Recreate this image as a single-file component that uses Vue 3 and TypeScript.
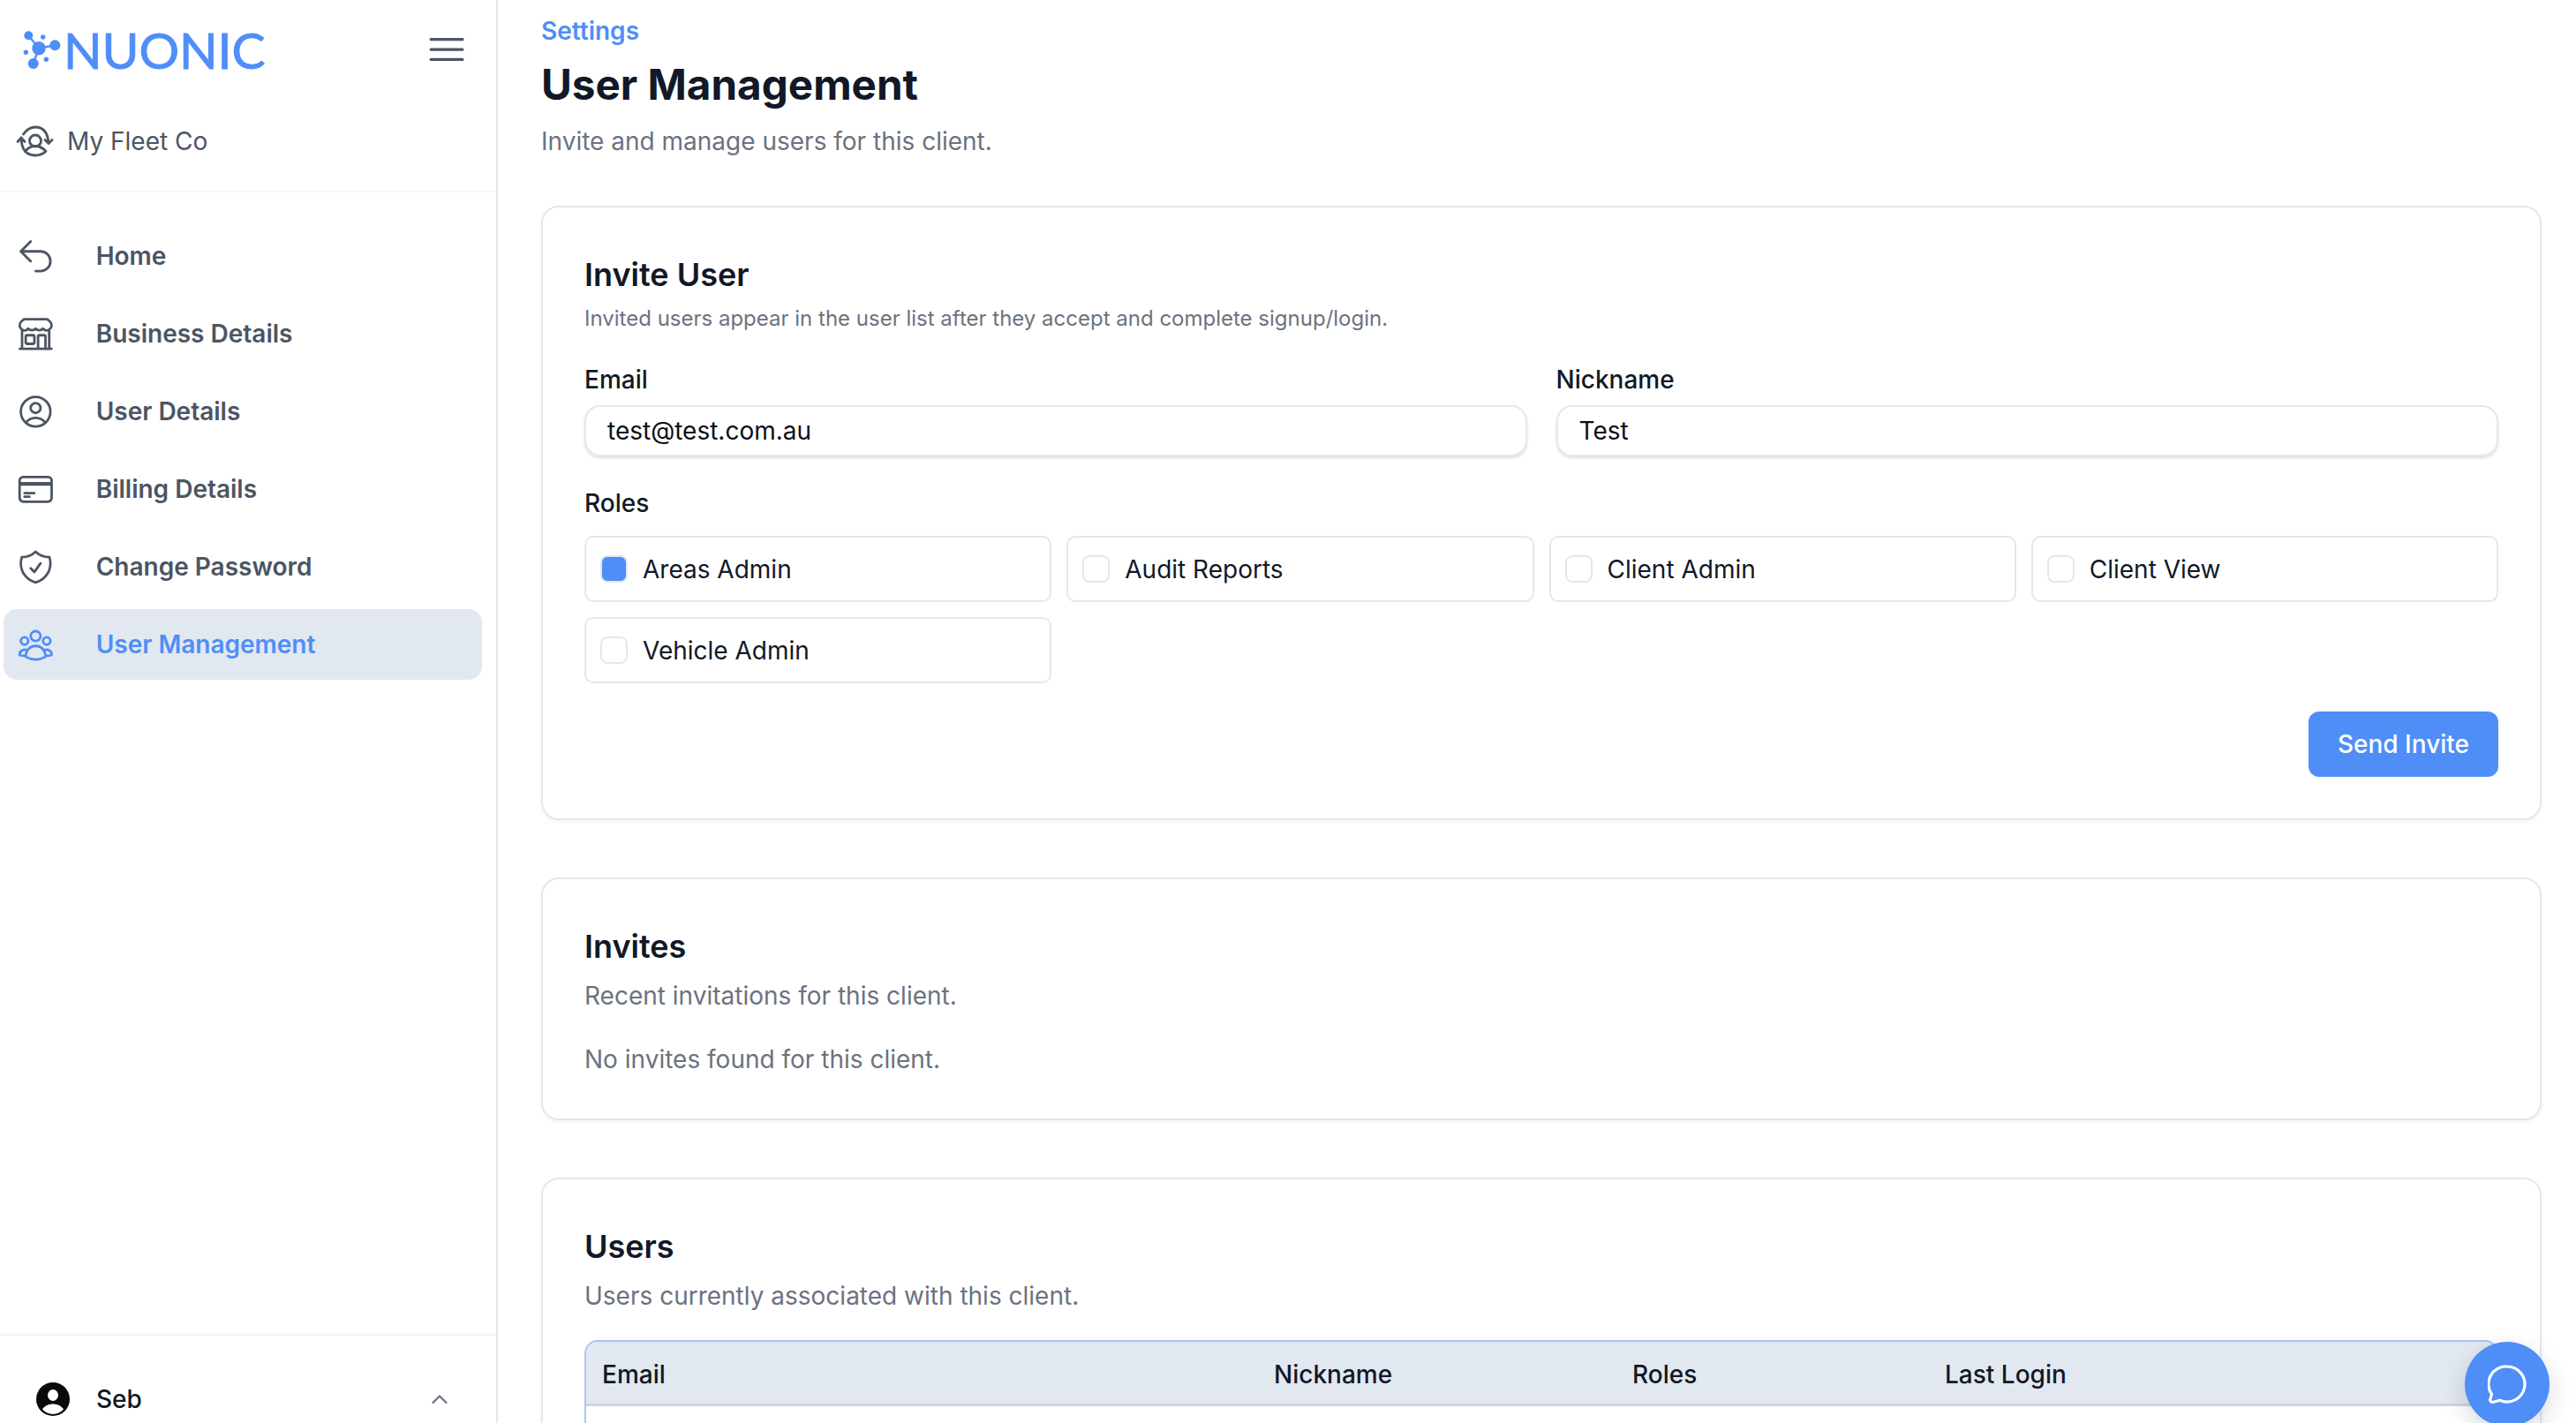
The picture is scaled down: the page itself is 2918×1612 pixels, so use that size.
<script setup lang="ts">
interface NavItem {
  label: string
  paths: string[]
  active?: boolean
}

const navItems: NavItem[] = [
  { label: 'Home', paths: ['M9 15 3 9m0 0 6-6M3 9h12a6 6 0 0 1 0 12h-3'] },
  {
    label: 'Business Details',
    paths: [
      'M13.5 21v-7.5a.75.75 0 0 1 .75-.75h3a.75.75 0 0 1 .75.75V21m-4.5 0H2.36m11.14 0H18m0 0h3.64m-1.39 0V9.349M3.75 21V9.349m0 0a3.004 3.004 0 0 0 3.75-.615A2.993 2.993 0 0 0 9.75 9.75c.896 0 1.7-.393 2.25-1.016a2.993 2.993 0 0 0 2.25 1.016c.896 0 1.7-.393 2.25-1.015a3.001 3.001 0 0 0 3.75.614m-16.5 0a3.004 3.004 0 0 1-.621-4.72l1.189-1.19A1.5 1.5 0 0 1 5.378 3h13.243a1.5 1.5 0 0 1 1.06.44l1.19 1.189a3 3 0 0 1-.621 4.72M6.75 18h3.75a.75.75 0 0 0 .75-.75V13.5a.75.75 0 0 0-.75-.75H6.75a.75.75 0 0 0-.75.75v3.75c0 .414.336.75.75.75Z'
    ]
  },
  {
    label: 'User Details',
    paths: [
      'M17.982 18.725A7.488 7.488 0 0 0 12 15.75a7.488 7.488 0 0 0-5.982 2.975m11.963 0a9 9 0 1 0-11.963 0m11.963 0A8.966 8.966 0 0 1 12 21a8.966 8.966 0 0 1-5.982-2.275M15 9.75a3 3 0 1 1-6 0 3 3 0 0 1 6 0Z'
    ]
  },
  {
    label: 'Billing Details',
    paths: [
      'M2.25 8.25h19.5M2.25 9h19.5m-16.5 5.25h6m-6 2.25h3m-3.75 3h15a2.25 2.25 0 0 0 2.25-2.25V6.75A2.25 2.25 0 0 0 19.5 4.5h-15a2.25 2.25 0 0 0-2.25 2.25v10.5A2.25 2.25 0 0 0 4.5 19.5Z'
    ]
  },
  {
    label: 'Change Password',
    paths: [
      'M9 12.75 11.25 15 15 9.75m-3-7.036A11.959 11.959 0 0 1 3.598 6 11.99 11.99 0 0 0 3 9.749c0 5.592 3.824 10.29 9 11.623 5.176-1.332 9-6.03 9-11.622 0-1.31-.21-2.571-.598-3.751h-.152c-3.196 0-6.1-1.248-8.25-3.285Z'
    ]
  },
  {
    label: 'User Management',
    active: true,
    paths: [
      'M18 18.72a9.094 9.094 0 0 0 3.741-.479 3 3 0 0 0-4.682-2.72m.94 3.198.001.031c0 .225-.012.447-.037.666A11.944 11.944 0 0 1 12 21c-2.17 0-4.207-.576-5.963-1.584A6.062 6.062 0 0 1 6 18.719m12 0a5.971 5.971 0 0 0-.941-3.197m0 0A5.995 5.995 0 0 0 12 12.75a5.995 5.995 0 0 0-5.058 2.772m0 0a3 3 0 0 0-4.68 2.72 8.986 8.986 0 0 0 3.74.477m.94-3.197a5.971 5.971 0 0 0-.94 3.197M15 6.75a3 3 0 1 1-6 0 3 3 0 0 1 6 0Zm6 3a2.25 2.25 0 1 1-4.5 0 2.25 2.25 0 0 1 4.5 0Zm-13.5 0a2.25 2.25 0 1 1-4.5 0 2.25 2.25 0 0 1 4.5 0Z'
    ]
  }
]

const roles = [
  { name: 'Areas Admin', checked: true },
  { name: 'Audit Reports', checked: false },
  { name: 'Client Admin', checked: false },
  { name: 'Client View', checked: false },
  { name: 'Vehicle Admin', checked: false }
]
</script>

<template>
  <div class="app">
    <aside class="sidebar">
      <div class="brand">
        <div class="logo">
          <svg class="logo-mark" viewBox="0 0 52 56" fill="#4f8ef7" stroke="#4f8ef7">
            <path d="M12.300 12.300 24 26.700 42.300 23.300M24 26.700 17.700 44" stroke-width="2.400" fill="none" />
            <g stroke="none">
              <circle cx="12.300" cy="12.300" r="5" />
              <circle cx="24" cy="26.700" r="7.700" />
              <circle cx="42.300" cy="23.300" r="6" />
              <circle cx="17.700" cy="44" r="6" />
              <circle cx="28.700" cy="14" r="2.700" />
              <circle cx="9.300" cy="31.300" r="2.700" />
              <circle cx="32.300" cy="39.300" r="2.700" />
            </g>
          </svg>
          <span class="logo-text">NUONIC</span>
        </div>
        <svg class="menu-icon" viewBox="0 0 24 24" fill="none" stroke="currentColor" stroke-width="1.5" stroke-linecap="round">
          <path d="M3.750 6.750h16.500M3.750 12h16.500m-16.500 5.250h16.500" />
        </svg>
      </div>

      <div class="client">
        <svg class="client-icon" viewBox="0 0 60 60" fill="none" stroke="currentColor" stroke-width="2.800" stroke-linecap="round" stroke-linejoin="round">
          <circle cx="30" cy="29.500" r="6.500" />
          <path d="M18.500 41.500C22 37 26 35.500 30 35.500s8 1.500 12 6c-4 3.500-8 4.500-12 4.500s-8-1-11.500-4.500Z" />
          <path d="M16.500 22C20 17 25 14 30 14c8 0 14 5 15 18" />
          <path d="M41 28.500 45 32.500 49 28.500" />
          <path d="M10 30.500 14 26 18 30.500M14 26c0 6 1 11 4.500 15.500" />
        </svg>
        <span>My Fleet Co</span>
      </div>

      <nav class="nav">
        <a v-for="item in navItems" :key="item.label" class="nav-item" :class="{ active: item.active }">
          <svg class="nav-icon" viewBox="0 0 24 24" fill="none" stroke="currentColor" stroke-width="1.5" stroke-linecap="round" stroke-linejoin="round">
            <path v-for="d in item.paths" :key="d" :d="d" />
          </svg>
          <span>{{ item.label }}</span>
        </a>
      </nav>

      <div class="account">
        <svg class="avatar" viewBox="0 0 38 38">
          <circle cx="19" cy="19" r="19" fill="#0a0a0a" />
          <ellipse cx="19" cy="14.500" rx="6" ry="6.500" fill="#fff" />
          <path d="M7 30.500c2.500-4 7-6 12-6s9.500 2 12 6c-3 3.400-7.300 5.500-12 5.500s-9-2.100-12-5.500Z" fill="#fff" />
        </svg>
        <span class="account-name">Seb</span>
        <svg class="chevron" viewBox="0 0 18 10" fill="none" stroke="currentColor" stroke-width="2.200" stroke-linecap="round" stroke-linejoin="round">
          <path d="M1.500 9 9 1.500 16.500 9" />
        </svg>
      </div>
    </aside>

    <main class="main">
      <p class="crumb">Settings</p>
      <h1 class="title">User Management</h1>
      <p class="subtitle">Invite and manage users for this client.</p>

      <section class="card invite">
        <h2 class="card-title">Invite User</h2>
        <p class="card-note">Invited users appear in the user list after they accept and complete signup/login.</p>

        <div class="fields">
          <div class="field">
            <label class="field-label">Email</label>
            <div class="input">test@test.com.au</div>
          </div>
          <div class="field">
            <label class="field-label">Nickname</label>
            <div class="input">Test</div>
          </div>
        </div>

        <div class="field-label roles-label">Roles</div>
        <div class="roles">
          <label v-for="role in roles" :key="role.name" class="role">
            <span class="checkbox" :class="{ checked: role.checked }"></span>
            <span>{{ role.name }}</span>
          </label>
        </div>

        <div class="actions">
          <button class="send" type="button">Send Invite</button>
        </div>
      </section>

      <section class="card">
        <h2 class="card-title">Invites</h2>
        <p class="card-sub">Recent invitations for this client.</p>
        <p class="card-empty">No invites found for this client.</p>
      </section>

      <section class="card users">
        <h2 class="card-title">Users</h2>
        <p class="card-sub">Users currently associated with this client.</p>
        <div class="table">
          <div class="table-head">
            <span class="col-email">Email</span>
            <span class="col-nick">Nickname</span>
            <span class="col-roles">Roles</span>
            <span>Last Login</span>
          </div>
          <div class="table-body"></div>
        </div>
      </section>
    </main>

    <button class="chat" type="button" aria-label="Chat">
      <svg viewBox="0 0 44 44" fill="none" stroke="#fff" stroke-width="3.200" stroke-linejoin="round">
        <path d="M22 2a20 20 0 1 1-8.300 38.200l-7 2c-2.500.6-4.600-.8-3.800-3.300l1.600-5.400A20 20 0 0 1 22 2Z" />
      </svg>
    </button>
  </div>
</template>

<style>
html,
body {
  margin: 0;
  height: 100%;
  background: #fff;
  overflow: hidden;
}
</style>

<style scoped>
.app {
  position: relative;
  display: flex;
  height: 1612px;
  overflow: hidden;
  background: #fff;
  color: #111827;
  font-family: Inter, "Liberation Sans", sans-serif;
  font-size: 28px;
}

.sidebar {
  flex: 0 0 564px;
  box-sizing: border-box;
  display: flex;
  flex-direction: column;
  border-right: 2px solid #e5e7eb;
}

.brand {
  display: flex;
  align-items: center;
  justify-content: space-between;
  height: 112px;
  padding: 0 30px 0 20px;
}

.logo {
  display: flex;
  align-items: center;
  gap: 0;
}

.logo-mark {
  width: 52px;
  height: 56px;
}

.logo-text {
  font-family: Lato, sans-serif;
  font-size: 57px;
  line-height: 44px;
  font-weight: 400;
  color: #4f8ef7;
  -webkit-text-stroke: 1px #4f8ef7;
}

.menu-icon {
  width: 52px;
  height: 52px;
  color: #4b5563;
}

.client {
  display: flex;
  align-items: center;
  gap: 6px;
  height: 106px;
  padding: 0 0 9px 10px;
  box-sizing: border-box;
  border-bottom: 2px solid #f3f4f6;
  color: #4b5563;
  font-size: 28px;
}

.client-icon {
  width: 60px;
  height: 60px;
  flex: none;
}

.nav {
  display: flex;
  flex-direction: column;
  gap: 8px;
  padding: 32px 16px 0 4px;
}

.nav-item {
  display: flex;
  align-items: center;
  gap: 46px;
  height: 80px;
  padding-left: 14px;
  border-radius: 15px;
  color: #4b5563;
  font-size: 28px;
  font-weight: 600;
}

.nav-item.active {
  background: #e2e8f0;
  color: #4f8ef7;
}

.nav-icon {
  width: 44.700px;
  height: 44.700px;
  flex: none;
}

.account {
  display: flex;
  align-items: center;
  margin-top: auto;
  height: 101px;
  box-sizing: border-box;
  padding: 54px 55px 9px 41px;
  border-top: 2px solid #f3f4f6;
}

.avatar {
  width: 38px;
  height: 38px;
  flex: none;
}

.account-name {
  margin-left: 30px;
  font-weight: 500;
}

.chevron {
  width: 18px;
  height: 10px;
  margin-left: auto;
  color: #6b7280;
}

.main {
  flex: 1;
  min-width: 0;
  padding: 19px 39px 0 49px;
}

.crumb {
  margin: 0;
  color: #4f8ef7;
  font-size: 28px;
  font-weight: 600;
  line-height: 32px;
}

.title {
  margin: 15px 0 0;
  font-size: 47.600px;
  line-height: 60px;
  font-weight: 700;
}

.subtitle {
  margin: 16px 0 0;
  color: #6b7280;
  font-size: 28px;
  line-height: 36px;
}

.card {
  box-sizing: border-box;
  margin-top: 65px;
  padding: 0 47px 49px;
  border: 2px solid #e2e8f0;
  border-radius: 20px;
  box-shadow: 0 2px 4px rgba(15, 23, 42, 0.05);
  background: #fff;
}

.card.invite {
  margin-top: 55px;
  padding-bottom: 47px;
}

.card-title {
  margin: 0;
  padding-top: 53px;
  font-size: 36px;
  line-height: 46px;
  font-weight: 600;
}

.card-note {
  margin: 11px 0 0;
  color: #6b7280;
  font-size: 24px;
  line-height: 32px;
}

.fields {
  display: grid;
  grid-template-columns: 1fr 1fr;
  gap: 33px;
  margin-top: 35px;
}

.field-label {
  display: block;
  font-weight: 500;
  line-height: 36px;
}

.input {
  box-sizing: border-box;
  height: 58px;
  margin-top: 11px;
  padding: 0 24px;
  border: 2px solid #e5e7eb;
  border-radius: 18px;
  box-shadow: 0 2px 3px rgba(15, 23, 42, 0.14);
  color: #0b0f19;
  font-size: 28px;
  line-height: 54px;
}

.roles-label {
  margin-top: 35px;
}

.roles {
  display: grid;
  grid-template-columns: repeat(4, 1fr);
  gap: 17px;
  margin-top: 19px;
}

.role {
  box-sizing: border-box;
  display: flex;
  align-items: center;
  gap: 17px;
  height: 75px;
  padding-left: 16px;
  border: 2px solid #e2e8f0;
  border-radius: 10px;
  font-size: 28px;
}

.checkbox {
  box-sizing: border-box;
  flex: none;
  width: 31px;
  height: 31px;
  border: 2px solid #e2e8f0;
  border-radius: 8px;
  background: #fff;
}

.checkbox.checked {
  background: #4f8ef7;
}

.actions {
  display: flex;
  justify-content: flex-end;
  margin-top: 32px;
}

.send {
  height: 74px;
  padding: 0 33px;
  border: 0;
  border-radius: 12px;
  background: #4f8ef7;
  color: #fff;
  font-family: inherit;
  font-size: 28px;
  font-weight: 500;
}

.card-sub {
  margin: 15px 0 0;
  color: #6b7280;
  font-size: 28px;
  line-height: 36px;
}

.card-empty {
  margin: 36px 0 0;
  color: #6b7280;
  font-size: 28px;
  line-height: 36px;
}

.users {
  padding-bottom: 0;
}

.table {
  margin-top: 32px;
  border: 2px solid #a5c5fb;
  border-bottom: 0;
  border-radius: 15px 15px 0 0;
  overflow: hidden;
}

.table-head {
  box-sizing: border-box;
  display: flex;
  align-items: center;
  height: 73px;
  padding: 4px 0 0 18px;
  background: #e2e8f0;
  border-bottom: 3px solid #d1d5db;
  font-weight: 500;
}

.col-email {
  width: 761px;
}

.col-nick {
  width: 406px;
}

.col-roles {
  width: 354px;
}

.table-body {
  height: 160px;
}

.chat {
  position: absolute;
  right: 30px;
  bottom: -4px;
  display: flex;
  align-items: center;
  justify-content: center;
  width: 96px;
  height: 96px;
  padding: 0;
  border: 0;
  border-radius: 50%;
  background: #4f8ef7;
  box-shadow: 0 10px 28px rgba(15, 23, 42, 0.16);
}

.chat svg {
  width: 44px;
  height: 44px;
}
</style>
